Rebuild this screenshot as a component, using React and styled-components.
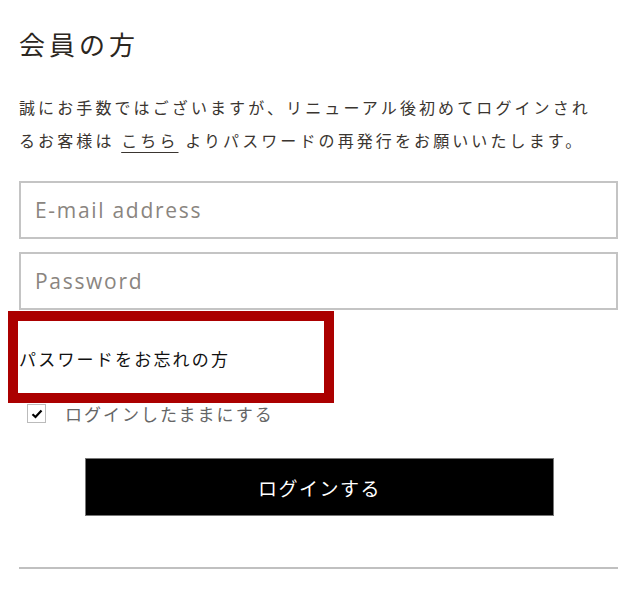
import React from 'react';
import styled, {createGlobalStyle} from 'styled-components';

const GlobalStyle = createGlobalStyle`
  body {
    margin: 0;
    background: #fff;
    font-family: "Noto Sans CJK JP", "Noto Sans", sans-serif;
  }
`;

const App = () => {
    return (
        <>
            <GlobalStyle/>
            <Page>
                <Title>会員の方</Title>
                <Notice>
                    誠にお手数ではございますが、リニューアル後初めてログインされるお客様は <NoticeLink href="#">こちら</NoticeLink> よりパスワードの再発行をお願いいたします。
                </Notice>
                <Form onSubmit={(e) => e.preventDefault()}>
                    <Field type="email" placeholder="E-mail address"/>
                    <Field type="password" placeholder="Password"/>
                    <Forgot>
                        <ForgotLink href="#">パスワードをお忘れの方</ForgotLink>
                        <Highlight/>
                    </Forgot>
                    <Remember>
                        <Check>
                            <svg width="12" height="10" viewBox="0 0 12 10">
                                <path d="M1.5 5.2 L4.5 8 L10.5 1.5" fill="none" stroke="#000" strokeWidth="2.2"/>
                            </svg>
                        </Check>
                        <RememberText>ログインしたままにする</RememberText>
                    </Remember>
                    <Submit type="submit">ログインする</Submit>
                </Form>
                <Divider/>
            </Page>
        </>
    );
};

const Page = styled.div`
  width: 599px;
  padding: 25px 0 0 19px;
`;

const Title = styled.h2`
  margin: 0;
  font-size: 26px;
  font-weight: 400;
  letter-spacing: 4px;
  line-height: 38px;
  color: #2b2620;
`;

const Notice = styled.p`
  margin: 28px 0 0;
  max-width: 585px;
  font-size: 16px;
  line-height: 33px;
  letter-spacing: 3.1px;
  color: #3a3530;
`;

const NoticeLink = styled.a`
  color: inherit;
  text-decoration: underline;
  text-underline-offset: 5px;
`;

const Form = styled.form`
  display: flex;
  flex-direction: column;
  margin-top: 24px;
`;

const Field = styled.input`
  box-sizing: border-box;
  width: 100%;
  height: 58px;
  margin-bottom: 13px;
  padding: 0 14px;
  border: 2px solid #c4c4c4;
  background: #fff;
  font-family: "Open Sans", "Noto Sans CJK JP", sans-serif;
  font-size: 21px;
  letter-spacing: 1.7px;
  outline: none;

  &::placeholder {
    color: #8a8580;
  }
`;

const Forgot = styled.div`
  position: relative;
  margin-top: 10px;
  height: 50px;
  display: flex;
  align-items: center;
`;

const ForgotLink = styled.a`
  font-size: 17px;
  letter-spacing: 2.2px;
  color: #111;
  text-decoration: none;
`;

const Highlight = styled.div`
  position: absolute;
  left: -11px;
  top: -22px;
  width: 326px;
  height: 92px;
  box-sizing: border-box;
  border: 10px solid #ab0000;
  pointer-events: none;
`;

const Remember = styled.label`
  display: flex;
  align-items: center;
  gap: 19px;
  margin: 18px 0 0 8px;
  height: 25px;
`;

const Check = styled.span`
  box-sizing: border-box;
  width: 19px;
  height: 19px;
  border: 1px solid #bbb;
  display: flex;
  align-items: center;
  justify-content: center;
`;

const RememberText = styled.span`
  font-size: 17px;
  letter-spacing: 2px;
  color: #666;
`;

const Submit = styled.button`
  align-self: flex-start;
  margin: 32px 0 0 66px;
  width: 469px;
  height: 58px;
  background: #000;
  border: 1px solid #777;
  color: #fff;
  font-family: "Noto Sans CJK JP", sans-serif;
  font-size: 19px;
  letter-spacing: 1.5px;
  cursor: pointer;
`;

const Divider = styled.hr`
  margin: 51px 0 0;
  width: 599px;
  border: 0;
  border-top: 2px solid #c0c0c0;
`;

export default App;
